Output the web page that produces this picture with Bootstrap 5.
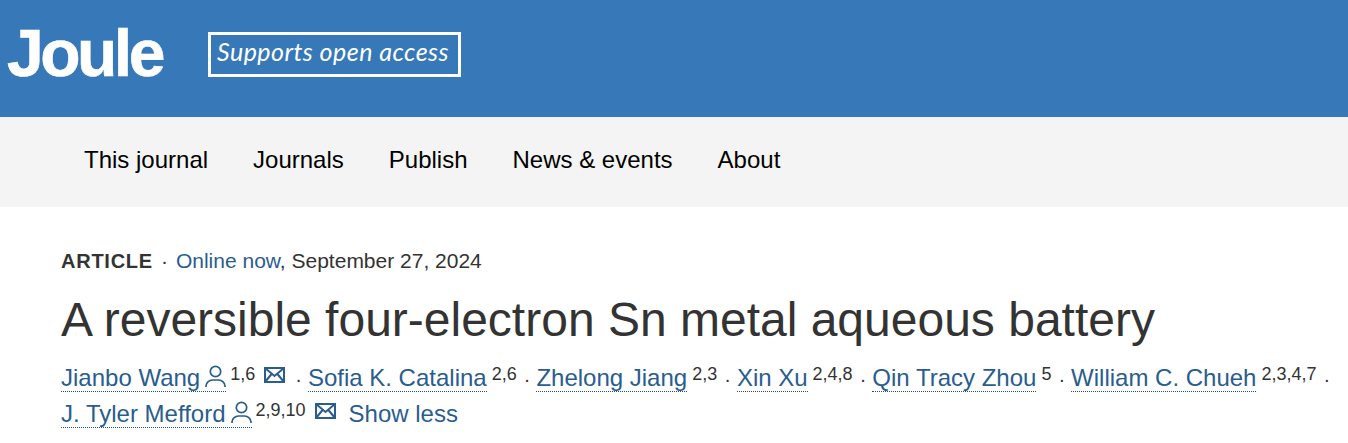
<!DOCTYPE html>
<html lang="en">
<head>
    <meta charset="UTF-8">
    <meta name="viewport" content="width=device-width, initial-scale=1.0">
    <title>A reversible four-electron Sn metal aqueous battery</title>
    <link href="https://cdn.jsdelivr.net/npm/bootstrap@5.3.0/dist/css/bootstrap.min.css" rel="stylesheet">
    <style>
        body { font-family: "Liberation Sans", Arial, sans-serif; color: #333; background: #fff; overflow: hidden; }
        .site-head { height: 117px; background: #3779b8; padding: 0 0 0 7px; }
        .site-logo { font-size: 66px; font-weight: 700; line-height: 1; letter-spacing: -3.5px; color: #fff; margin-top: 20px; width: 201px; -webkit-text-stroke: .6px #fff; }
        .site-tag { margin-top: 32px; width: 253px; height: 45px; border: 3px solid #fff; color: #fff; font-family: "Lato", sans-serif; font-style: italic; font-size: 25px; line-height: 33px; letter-spacing: .47px; padding-left: 6px; white-space: nowrap; }
        .site-nav { height: 90px; background: #f4f4f4; padding-left: 84px; gap: 45px; padding-bottom: 5px; }
        .site-nav a { color: #000; font-size: 24px; text-decoration: none; }
        .art-wrap { padding: 41px 0 0 61px; }
        .art-meta { font-size: 21px; line-height: 26px; }
        .art-meta b { font-size: 20px; letter-spacing: .75px; }
        .art-meta a, .au-list a { color: #2a5d8f; text-decoration: none; }
        .art-title { font-size: 48px; font-weight: 400; line-height: 60px; margin: 16px 0 0; }
        .au-list { font-size: 24px; line-height: 36px; margin-top: 10px; width: 1280px; }
        .au-list .au-name { border-bottom: 1px dotted #1d5080; }
        .au-list sup { font-size: 18px; top: -6px; line-height: 0; vertical-align: baseline; position: relative; margin-left: 5px; }
        .au-list sup.sup-tight { margin-left: 4px; }
        .au-sep { margin: 0 6px 0 7px; font-size: 20px; line-height: 1; }
        .au-icon { vertical-align: -1px; margin-left: 5px; }
        .mail-icon { margin: 0 3px 0 9px; vertical-align: 3px; }
        .show-more { margin-left: 10px; }
    </style>
</head>
<body>
    <header class="site-head d-flex">
        <div class="site-logo">Joule</div>
        <div class="site-tag">Supports open access</div>
    </header>

    <nav class="site-nav d-flex align-items-center">
        <a href="#">This journal</a>
        <a href="#">Journals</a>
        <a href="#">Publish</a>
        <a href="#">News &amp; events</a>
        <a href="#">About</a>
    </nav>

    <main class="art-wrap">
        <div class="art-meta"><b>ARTICLE</b><span class="mx-2">·</span><a href="#">Online now</a>, September 27, 2024</div>
        <h1 class="art-title">A reversible four-electron Sn metal aqueous battery</h1>
        <div class="au-list">
            <a href="#" class="au-name">Jianbo Wang<svg class="au-icon" width="21" height="22" viewBox="0 0 21 22" fill="none" stroke="#2a5d8f" stroke-width="1.7"><circle cx="10.500" cy="6.500" r="5.200"/><path d="M1 22v-1a6.500 6 0 0 1 6.500-6h6a6.500 6 0 0 1 6.500 6v1"/></svg></a><sup class="sup-tight">1,6</sup><svg class="mail-icon" width="21" height="16" viewBox="0 0 21 16" fill="none" stroke="#2a5d8f" stroke-width="2"><rect x="1" y="1" width="19" height="14"/><path d="M1 1l9.500 8 9.500-8M1 15l7-8.500M20 15l-7-8.500"/></svg><span class="au-sep">·</span><a href="#" class="au-name">Sofia K. Catalina</a><sup>2,6</sup><span class="au-sep">·</span><a href="#" class="au-name">Zhelong Jiang</a><sup>2,3</sup><span class="au-sep">·</span><a href="#" class="au-name">Xin Xu</a><sup>2,4,8</sup><span class="au-sep">·</span><a href="#" class="au-name">Qin Tracy Zhou</a><sup>5</sup><span class="au-sep">·</span><a href="#" class="au-name">William C. Chueh</a><sup>2,3,4,7</sup><span class="au-sep">·</span><br>
            <a href="#" class="au-name">J. Tyler Mefford<svg class="au-icon" width="21" height="22" viewBox="0 0 21 22" fill="none" stroke="#2a5d8f" stroke-width="1.7"><circle cx="10.500" cy="6.500" r="5.200"/><path d="M1 22v-1a6.500 6 0 0 1 6.500-6h6a6.500 6 0 0 1 6.500 6v1"/></svg></a><sup class="sup-tight">2,9,10</sup><svg class="mail-icon" width="21" height="16" viewBox="0 0 21 16" fill="none" stroke="#2a5d8f" stroke-width="2"><rect x="1" y="1" width="19" height="14"/><path d="M1 1l9.500 8 9.500-8M1 15l7-8.500M20 15l-7-8.500"/></svg><a href="#" class="show-more">Show less</a>
        </div>
    </main>

    <script src="https://cdn.jsdelivr.net/npm/bootstrap@5.3.0/dist/js/bootstrap.bundle.min.js"></script>
</body>
</html>
